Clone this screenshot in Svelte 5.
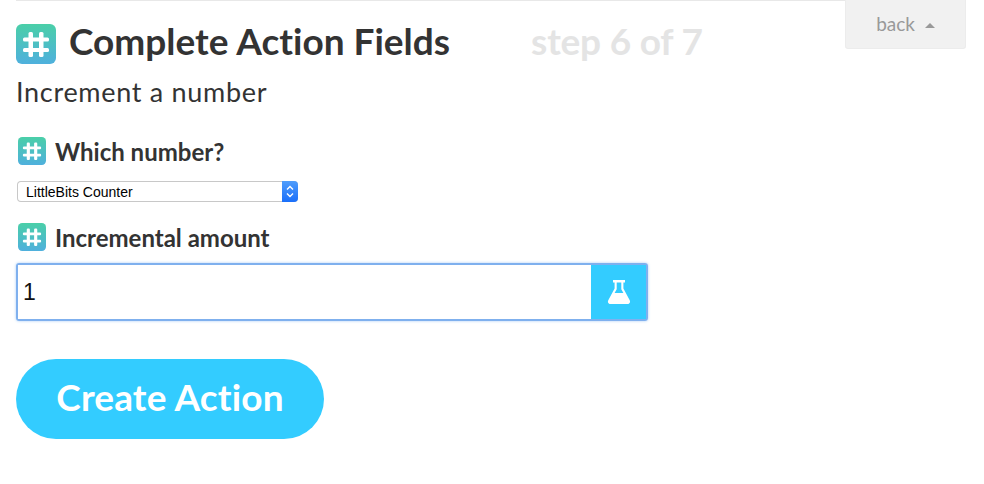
<script>
  let amount = $state("1");
  let which = $state("LittleBits Counter");
</script>

{#snippet hashIcon(cls)}
  <svg class={cls} viewBox="0 0 40 40" aria-hidden="true">
    <defs>
      <linearGradient id="tile-{cls}" x1="0" y1="0" x2="0" y2="1">
        <stop offset="0" stop-color="#4acfa8" />
        <stop offset="1" stop-color="#4fb0dd" />
      </linearGradient>
    </defs>
    <rect width="40" height="40" rx="6" fill="url(#tile-{cls})" />
    <g fill="#fff">
      <rect x="12.500" y="8" width="4.500" height="25" rx="1.500" />
      <rect x="23" y="8" width="4.500" height="25" rx="1.500" />
      <rect x="7" y="13.500" width="26" height="4" rx="1.500" />
      <rect x="7" y="24" width="26" height="4" rx="1.500" />
    </g>
  </svg>
{/snippet}

<main>
  <div class="top">
    <div class="intro">
      <div class="title-row">
        {@render hashIcon("big")}
        <h1>Complete Action Fields</h1>
        <span class="step">step 6 of 7</span>
      </div>
      <p class="sub">Increment a number</p>
    </div>
    <button class="back">back <i class="caret"></i></button>
  </div>

  <div class="field first">
    <div class="label">
      {@render hashIcon("small")}
      <label for="which">Which number?</label>
    </div>
    <div class="select">
      <select id="which" bind:value={which}>
        <option>LittleBits Counter</option>
      </select>
      <span class="stepper">
        <svg viewBox="0 0 16 21" width="16" height="21" aria-hidden="true">
          <path d="M5 8.500 8 5.500 11 8.500M5 12.500 8 15.500 11 12.500" fill="none" stroke="#fff" stroke-width="1.400" />
        </svg>
      </span>
    </div>
  </div>

  <div class="field second">
    <div class="label">
      {@render hashIcon("small")}
      <label for="amount">Incremental amount</label>
    </div>
    <div class="input">
      <input id="amount" bind:value={amount} />
      <span class="flask">
        <svg viewBox="0 0 24 26" width="24" height="26" aria-hidden="true">
          <path
            fill="#fff"
            d="M6 1h12v2.400h-1.600v6.200l6.300 11.600c1 1.900-.1 3.800-2.200 3.800H3.500c-2.100 0-3.200-1.900-2.200-3.800L7.600 9.600V3.400H6zM9.700 3.400v6.800L7.600 14h8.800l-2.100-3.800V3.400z"
          />
        </svg>
      </span>
    </div>
  </div>

  <button class="create">Create Action</button>
</main>

<style>
  :global(body) {
    background: #fff;
  }

  main {
    width: 950px;
    padding-left: 16px;
    font-family: Lato, "Open Sans", sans-serif;
    font-variant-ligatures: none;
    color: #333;
  }

  .top {
    display: flex;
    align-items: flex-start;
  }

  .intro {
    flex: 1;
    border-top: 1px solid #e8e8e8;
    padding-top: 23px;
  }

  .title-row {
    display: flex;
    align-items: center;
    height: 40px;
  }

  .big {
    width: 40px;
    height: 40px;
    flex: none;
  }

  h1 {
    margin: 0 0 6px 13px;
    font-size: 37px;
    font-weight: 700;
    line-height: 34px;
    white-space: nowrap;
  }

  .step {
    margin: 0 0 6px 81px;
    font-size: 37px;
    letter-spacing: -0.2px;
    line-height: 34px;
    font-weight: 700;
    color: #e4e4e4;
    white-space: nowrap;
  }

  .sub {
    margin: 12px 0 0;
    font-size: 27px;
    letter-spacing: 0.7px;
    line-height: 32px;
    font-weight: 400;
  }

  .back {
    width: 121px;
    height: 49px;
    flex: none;
    background: #f1f1f1;
    border: 1px solid #ececec;
    border-top: 0;
    border-radius: 0 0 3px 3px;
    color: #999;
    font: 400 19px Lato, sans-serif;
    padding: 0 0 2px;
  }

  .caret {
    display: inline-block;
    margin-left: 5px;
    vertical-align: 3px;
    border-left: 5px solid transparent;
    border-right: 5px solid transparent;
    border-bottom: 5px solid #999;
  }

  .field.first {
    margin-top: 29px;
  }

  .field.second {
    margin-top: 21px;
  }

  .label {
    display: flex;
    align-items: center;
    padding-left: 2px;
    height: 28px;
  }

  .small {
    width: 28px;
    height: 28px;
    flex: none;
  }

  label {
    margin-left: 9px;
    font-size: 24px;
    font-weight: 700;
  }

  .select {
    display: flex;
    width: 281px;
    height: 21px;
    margin: 16px 0 0 1px;
    border-radius: 4px;
    overflow: hidden;
    box-shadow: inset 0 0 0 1px #c8c8c8;
  }

  select {
    flex: 1;
    min-width: 0;
    appearance: none;
    border: 0;
    background: transparent;
    padding: 0 0 0 9px;
    font: 14px "Liberation Sans", sans-serif;
    color: #000;
  }

  .stepper {
    width: 16px;
    flex: none;
    background: linear-gradient(#4f9dfb, #1a6ffa);
  }

  .stepper svg {
    display: block;
  }

  .input {
    display: flex;
    width: 632px;
    height: 58px;
    margin-top: 12px;
    box-sizing: border-box;
    border: 2px solid #7fb0ee;
    border-radius: 3px;
    box-shadow: 0 0 3px #a9cdf7;
  }

  input {
    flex: 1;
    min-width: 0;
    border: 0;
    outline: 0;
    padding: 0 0 0 5px;
    font: 23px "Liberation Sans", sans-serif;
    color: #111;
  }

  .flask {
    display: flex;
    align-items: center;
    justify-content: center;
    width: 55px;
    flex: none;
    background: #33ccff;
  }

  .create {
    display: block;
    width: 308px;
    height: 80px;
    margin-top: 38px;
    border: 0;
    border-radius: 40px;
    background: #33ccff;
    color: #fff;
    font: 700 37px Lato, sans-serif;
    font-variant-ligatures: none;
    letter-spacing: 0.15px;
    padding: 0 0 6px;
  }
</style>
